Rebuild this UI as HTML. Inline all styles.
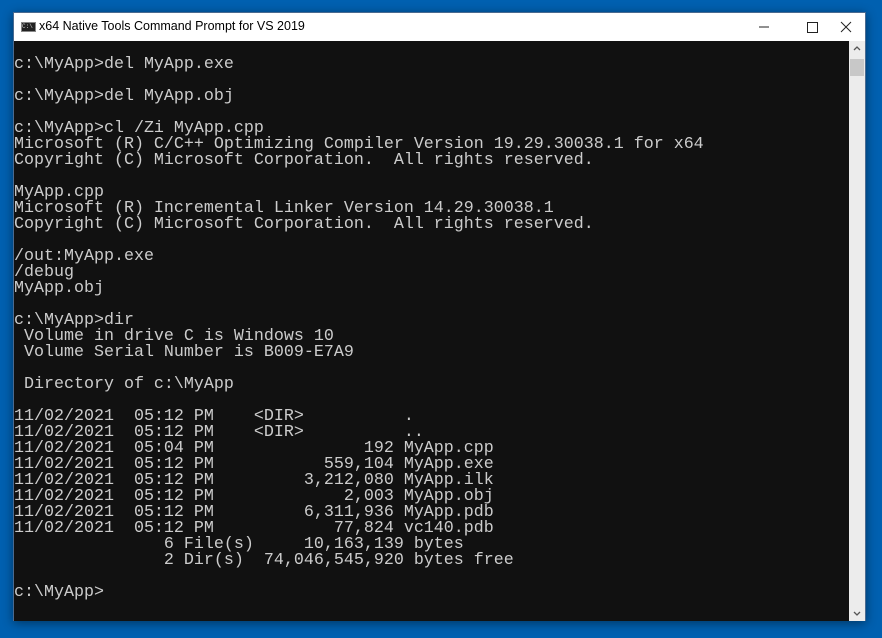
<!DOCTYPE html>
<html><head><style>
html,body{margin:0;padding:0;width:882px;height:638px;overflow:hidden;background:#0060b0;}
.win{position:absolute;left:13px;top:12px;width:853px;height:609px;background:#fff;box-shadow:0 2px 10px rgba(0,0,0,.45);border:1px solid #4a6a90;box-sizing:border-box;}
.title{position:absolute;left:0;top:0;width:851px;height:28px;background:#fff;font-family:"Liberation Sans",sans-serif;font-size:12.5px;color:#000;}
.title .t{position:absolute;left:25px;top:6px;}
.icon{position:absolute;left:7px;top:9px;width:15px;height:10px;background:#222;border:1px solid #888;box-sizing:border-box;font:6px "Liberation Mono",monospace;color:#ccc;line-height:8px;}
.con{position:absolute;left:0;top:28px;width:835px;height:580px;background:#111;overflow:hidden;}
pre{margin:0;position:absolute;left:0;top:0;font-family:"Liberation Mono",monospace;font-size:16.67px;line-height:16px;color:#cccccc;}
.sb{position:absolute;left:835px;top:28px;width:16px;height:580px;background:#ececec;}
.thumb{position:absolute;left:1px;top:18px;width:14px;height:17px;background:#c8c8c8;}
</style></head><body>
<div class="win">
 <div class="title"><div class="icon">C:\</div><span class="t">x64 Native Tools Command Prompt for VS 2019</span>
  <svg style="position:absolute;left:720px;top:6px" width="120" height="16">
   <line x1="25" y1="8" x2="35" y2="8" stroke="#222" stroke-width="1"/>
   <rect x="73.5" y="3.5" width="10" height="10" fill="none" stroke="#222"/>
   <path d="M117 3 L127 13 M127 3 L117 13" stroke="#222" transform="translate(-10,0)"/>
  </svg>
 </div>
 <div class="con"><pre>&#8203;
c:\MyApp>del MyApp.exe

c:\MyApp>del MyApp.obj

c:\MyApp>cl /Zi MyApp.cpp
Microsoft (R) C/C++ Optimizing Compiler Version 19.29.30038.1 for x64
Copyright (C) Microsoft Corporation.  All rights reserved.

MyApp.cpp
Microsoft (R) Incremental Linker Version 14.29.30038.1
Copyright (C) Microsoft Corporation.  All rights reserved.

/out:MyApp.exe
/debug
MyApp.obj

c:\MyApp>dir
 Volume in drive C is Windows 10
 Volume Serial Number is B009-E7A9

 Directory of c:\MyApp

11/02/2021  05:12 PM    &lt;DIR&gt;          .
11/02/2021  05:12 PM    &lt;DIR&gt;          ..
11/02/2021  05:04 PM               192 MyApp.cpp
11/02/2021  05:12 PM           559,104 MyApp.exe
11/02/2021  05:12 PM         3,212,080 MyApp.ilk
11/02/2021  05:12 PM             2,003 MyApp.obj
11/02/2021  05:12 PM         6,311,936 MyApp.pdb
11/02/2021  05:12 PM            77,824 vc140.pdb
               6 File(s)     10,163,139 bytes
               2 Dir(s)  74,046,545,920 bytes free

c:\MyApp></pre></div>
 <div class="sb"><div class="thumb"></div>
  <svg style="position:absolute;left:0;top:0" width="16" height="580">
   <path d="M5 9 L8 6 L11 9" fill="none" stroke="#555" stroke-width="1.3"/>
   <path d="M5 571 L8 574 L11 571" fill="none" stroke="#555" stroke-width="1.3"/>
  </svg>
 </div>
</div>
</body></html>
